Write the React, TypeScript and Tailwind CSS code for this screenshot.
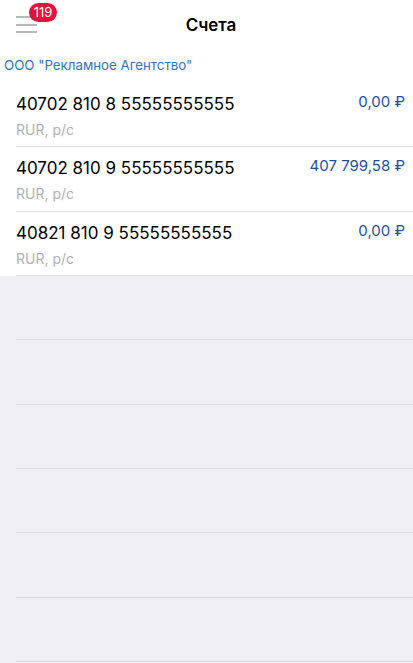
import React from 'react';

const ACCOUNTS = [
  { number: '40702 810 8 55555555555', amount: '0,00 ₽' },
  { number: '40702 810 9 55555555555', amount: '407 799,58 ₽' },
  { number: '40821 810 9 55555555555', amount: '0,00 ₽' },
];

export default function App() {
  return (
    <div className="h-[663px] w-[413px] overflow-hidden bg-[#efeff4] font-['Inter','Liberation_Sans',sans-serif]">
      {/* шапка */}
      <div className="bg-white">
        <div className="grid h-[48px] grid-cols-[1fr_auto_1fr] items-center">
          <div className="relative h-full">
            <div className="absolute left-4 top-[16px] flex w-[21px] flex-col gap-[5.5px]">
              <span className="h-[2px] bg-[#b8b8b8]" />
              <span className="h-[2px] bg-[#b8b8b8]" />
              <span className="h-[2px] bg-[#b8b8b8]" />
            </div>
            <span className="absolute left-[29px] top-[3px] flex h-[19px] min-w-[28px] items-center justify-center rounded-full bg-[#e2133d] px-[4px] text-[13px] leading-none text-white">
              119
            </span>
          </div>
          <h1 className="mt-[3px] pl-[9px] text-[17px] font-semibold text-black">Счета</h1>
          <div />
        </div>

        <div className="flex h-[35px] items-center px-1 pt-[1px] text-[13.3px] text-[#2f74c2]">
          ООО "Рекламное Агентство"
        </div>

        {/* счета */}
        {ACCOUNTS.map((acc) => (
          <div key={acc.number} className="ml-4 h-[64.33px] border-b border-[#e1e1e5] pr-2">
            <div className="flex items-start justify-between pt-[10px]">
              <span className="text-[17px] leading-[22px] text-black">{acc.number}</span>
              <span className="-mt-[1px] text-[15px] leading-[20px] text-[#1d4ea5]">{acc.amount}</span>
            </div>
            <div className="mt-[6px] text-[14px] leading-[18px] text-[#b1b1b5]">RUR, р/с</div>
          </div>
        ))}
      </div>

      {/* пустые строки */}
      {Array.from({ length: 6 }).map((_, i) => (
        <div key={i} className="ml-4 h-[64.33px] border-b border-[#dcdce1]" />
      ))}
    </div>
  );
}
